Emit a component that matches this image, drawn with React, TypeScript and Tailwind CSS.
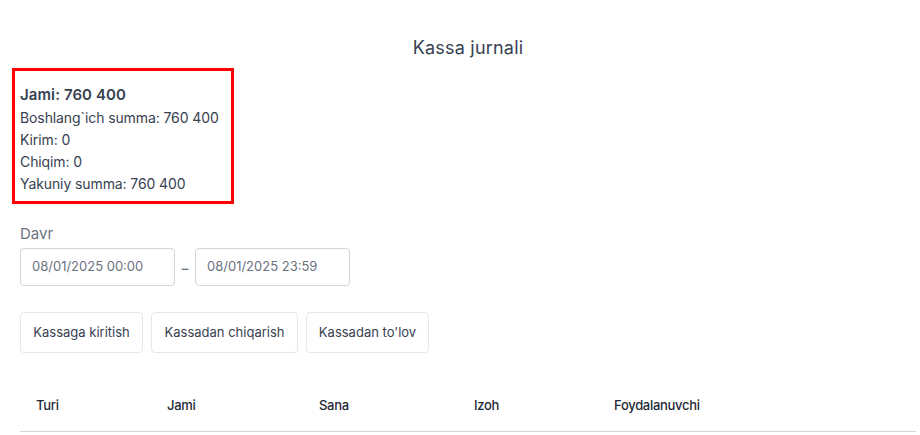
import React from "react";

export default function App() {
  const font = { fontFamily: "Inter, 'Noto Sans', sans-serif" };
  return (
    <div className="w-[920px] h-[435px] overflow-hidden bg-white text-[#374151]" style={font}>
      <div className="pt-[35px] text-center text-[18px] leading-[26px] text-[#374151] pl-[16px] tracking-[0.2px]">Kassa jurnali</div>
      <div className="ml-[12px] mt-[7px] w-[222px] h-[136px] border-[3px] border-[#ff0000] pl-[5px] pt-[13px]">
        <div className="text-[15px] leading-[22px] font-semibold text-[#374151] tracking-[0.1px]">Jami: 760 400</div>
        <div className="mt-[1px] text-[14px] leading-[22px] text-[#374151] tracking-[-0.1px]">
          <div>Boshlang`ich summa: 760 400</div>
          <div>Kirim: 0</div>
          <div>Chiqim: 0</div>
          <div>Yakuniy summa: 760 400</div>
        </div>
      </div>
      <div className="px-[20px]">
        <div className="mt-[20px] text-[15px] leading-[20px] text-[#6b7280]">Davr</div>
        <div className="mt-[4px] flex items-center">
          <div className="w-[155px] h-[38px] border border-[#d1d5db] rounded-[4px] flex items-center pl-[11px] text-[13px] text-[#6b7280]">08/01/2025 00:00</div>
          <div className="w-[20px] text-center text-[13px] font-semibold text-[#6b7280] pt-[3px]">–</div>
          <div className="w-[155px] h-[38px] border border-[#d1d5db] rounded-[4px] flex items-center pl-[11px] text-[13px] text-[#6b7280]">08/01/2025 23:59</div>
        </div>
        <div className="mt-[26px] flex gap-[8px]">
          <button className="w-[123px] h-[41px] border border-[#e5e7eb] rounded-[4px] text-[13px] text-[#374151]">Kassaga kiritish</button>
          <button className="w-[147px] h-[41px] border border-[#e5e7eb] rounded-[4px] text-[13px] text-[#374151]">Kassadan chiqarish</button>
          <button className="w-[123px] h-[41px] border border-[#e5e7eb] rounded-[4px] text-[13px] text-[#374151]">Kassadan to'lov</button>
        </div>
        <div className="mt-[27px] w-[896px] h-[52px] border-b border-[#d1d5db] flex items-center text-[13px] font-medium text-[#1f2937] tracking-[-0.3px]">
          <div className="w-[147px] pl-[16px]">Turi</div>
          <div className="w-[152px]">Jami</div>
          <div className="w-[155px]">Sana</div>
          <div className="w-[140px]">Izoh</div>
          <div>Foydalanuvchi</div>
        </div>
      </div>
    </div>
  );
}
